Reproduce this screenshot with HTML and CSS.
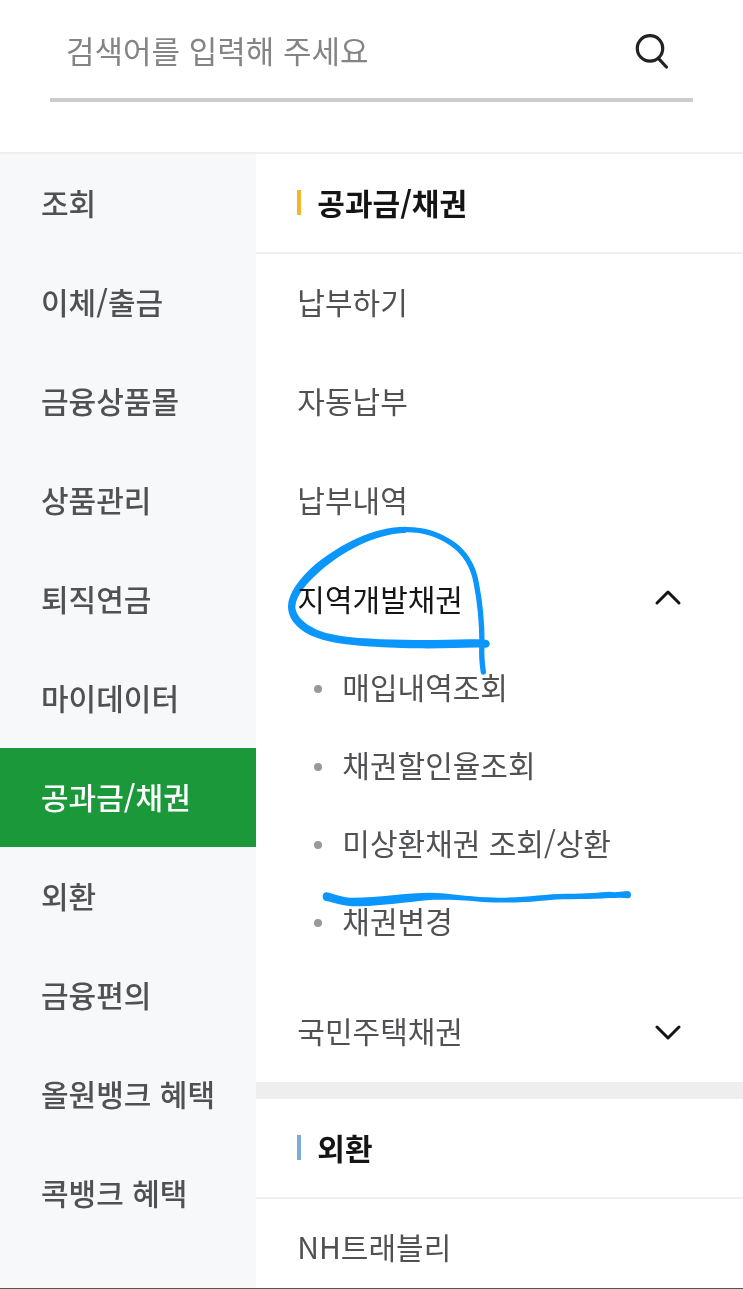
FILE: index.html
```html
<!DOCTYPE html>
<html lang="ko">
<head>
<meta charset="utf-8">
<meta name="viewport" content="width=device-width, initial-scale=1">
<title>전체메뉴</title>
<link rel="stylesheet" href="styles.css">
</head>
<body>
<div class="app">
  <header class="header">
    <form class="search" role="search">
      <input class="search-input" type="text" aria-label="검색어" placeholder="검색어를 입력해 주세요">
      <button class="search-button" type="button" aria-label="검색">
        <svg class="search-icon" viewBox="0 0 36 40" aria-hidden="true"><circle cx="17" cy="19.4" r="12.7"/><path d="M25.4 29.4 33.4 38"/></svg>
      </button>
    </form>
  </header>
  <main class="main">
    <nav class="sidebar" aria-label="메뉴 분류">
      <a class="category" href="#">조회</a>
      <a class="category" href="#">이체/출금</a>
      <a class="category" href="#">금융상품몰</a>
      <a class="category" href="#">상품관리</a>
      <a class="category" href="#">퇴직연금</a>
      <a class="category" href="#">마이데이터</a>
      <a class="category category-active" href="#" aria-current="true">공과금/채권</a>
      <a class="category" href="#">외환</a>
      <a class="category" href="#">금융편의</a>
      <a class="category" href="#">올원뱅크 혜택</a>
      <a class="category" href="#">콕뱅크 혜택</a>
    </nav>
    <div class="content">
      <section class="group">
        <h2 class="group-title">공과금/채권</h2>
        <a class="item" href="#">납부하기</a>
        <a class="item" href="#">자동납부</a>
        <a class="item" href="#">납부내역</a>
        <div class="marked">
          <button class="item item-open" type="button" aria-expanded="true">지역개발채권
            <svg class="chevron" viewBox="0 0 28 20" aria-hidden="true"><path d="M3 15 14 4 25 15"/></svg>
          </button>
          <svg class="mark mark-circle" viewBox="0 0 780 660" aria-hidden="true">
            <path class="mark-stroke" d="M440 59C500 56 548 72 590 102C632 132 651 170 660 215C671 270 678 330 678 402C676 430 678 460 682 486"/>
            <path d="M450 50C350 50 250 105 178 163C128 208 97 250 96 290C97 337 140 372 200 389C260 407 370 412 480 415C560 417 630 411 690 413C706 410 704 390 690 389C620 385 560 391 480 390C380 388 290 387 225 372C165 359 119 325 118 290C120 255 152 219 197 179C260 127 350 72 450 68Z"/>
          </svg>
        </div>
        <ul class="sublist">
          <li><a class="subitem" href="#">매입내역조회</a></li>
          <li><a class="subitem" href="#">채권할인율조회</a></li>
          <li class="marked"><a class="subitem" href="#">미상환채권 조회/상환</a>
            <svg class="mark mark-line" viewBox="0 0 1050 390" aria-hidden="true"><path d="M80 217C100 220 115 231 150 233C230 234 320 218 390 218C450 220 500 229 560 232C650 237 720 222 800 221C860 221 900 217 928 215L944 217 960 215 984 213C996 214 996 235 984 235L960 233 944 234 925 234C880 239 800 236 750 240C700 245 640 251 540 245C480 240 420 238 380 241C320 247 250 257 180 259C130 260 95 245 75 242C64 237 66 217 80 217Z"/></svg>
          </li>
          <li><a class="subitem" href="#">채권변경</a></li>
        </ul>
        <button class="item" type="button" aria-expanded="false">국민주택채권
          <svg class="chevron" viewBox="0 0 28 20" aria-hidden="true"><path d="M3 7 14 18 25 7"/></svg>
        </button>
      </section>
      <section class="group group-exchange">
        <h2 class="group-title">외환</h2>
        <a class="item" href="#">NH트래블리</a>
      </section>
    </div>
  </main>
</div>
</body>
</html>
```
FILE: styles.css
```css
* { box-sizing: border-box; }
body {
  margin: 0;
  background: #fff;
  color: #505153;
  font: 400 30px/44px "Noto Sans CJK KR", sans-serif;
}
a { color: inherit; text-decoration: none; }
button { font: inherit; color: inherit; background: none; border: 0; padding: 0; cursor: pointer; }
.app {
  display: flex;
  flex-direction: column;
  height: 100vh;
  overflow: hidden;
  border-bottom: 1px solid #555;
}
.header { flex: none; padding: 0 50px 50px; border-bottom: 2px solid #efefef; }
.search {
  display: flex;
  align-items: center;
  height: 102px;
  padding: 0 24px 0 16px;
  border-bottom: 4px solid #ccc;
}
.search-input {
  flex: 1;
  min-width: 0;
  height: 60px;
  padding: 0;
  border: 0;
  outline: 0;
  background: none;
  color: #505153;
  font: inherit;
  font-size: 31px;
}
.search-input::placeholder { color: #848484; opacity: 1; }
.search-button { display: flex; }
.search-icon { width: 36px; height: 40px; fill: none; stroke: #222; stroke-width: 3.2; stroke-linecap: round; }
.main { display: flex; flex: 1; min-height: 0; }
.sidebar { flex: none; width: 34.5%; background: #f7f8fa; }
.category {
  display: flex;
  align-items: center;
  height: 99px;
  padding: 0 0 4px 41px;
  font-weight: 500;
}
.category-active { background: #1b983a; color: #fff; }
.content { flex: 1; min-width: 0; }
.group-title {
  display: flex;
  align-items: center;
  gap: 16px;
  height: 100px;
  margin: 0;
  padding: 0 0 2px 41px;
  border-bottom: 2px solid #efefef;
  color: #151515;
  font-size: 30px;
  font-weight: 700;
}
.group-title::before { content: ""; width: 4px; height: 25px; background: #f8b32c; }
.group-exchange { border-top: 17px solid #eee; }
.group-exchange .group-title::before { background: #7cabda; }
.item {
  display: flex;
  align-items: center;
  justify-content: space-between;
  width: 100%;
  height: 99px;
  padding: 0 61px 6px 41px;
  text-align: left;
}
.item-open { color: #151515; }
.chevron { width: 28px; height: 20px; fill: none; stroke: #151515; stroke-width: 3; stroke-linecap: round; stroke-linejoin: round; }
.sublist { margin: 0; padding: 0 0 21px; list-style: none; }
.subitem {
  display: flex;
  align-items: center;
  gap: 20px;
  height: 78px;
  padding: 0 0 6px 58px;
}
.subitem::before { content: ""; width: 8px; height: 8px; margin-top: 6px; border-radius: 50%; background: #999; }
.marked { position: relative; }
.mark { position: absolute; fill: #0b96fb; pointer-events: none; mix-blend-mode: multiply; }
.mark-stroke { fill: none; stroke: #0b96fb; stroke-width: 16; stroke-linecap: round; }
.mark-circle { left: 0; top: -41px; width: 260px; height: 220px; }
.mark-line { left: 44px; top: 14px; width: 350px; height: 130px; }
```
